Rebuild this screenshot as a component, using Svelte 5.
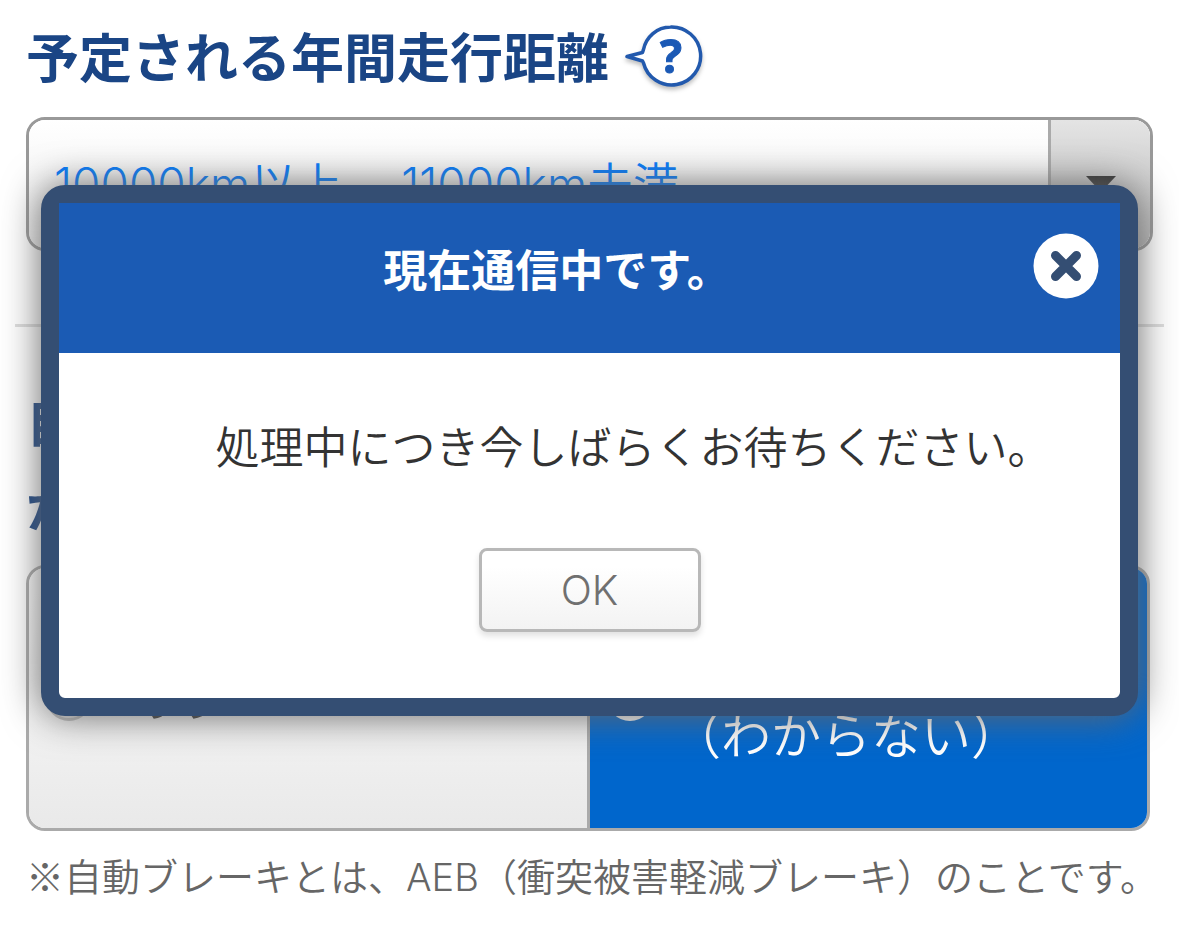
<script>
  let mileage = $state('10000');
  let brake = $state('no');
  let open = $state(true);
</script>

<main>
  <form>
    <section class="block first">
      <div class="title-row">
        <label class="title" for="mileage">予定される年間走行距離</label>
        <button type="button" class="help" aria-label="ヘルプ">
          <svg viewBox="0 0 80 70" width="80" height="70" aria-hidden="true">
            <path class="bubble" d="M19.5 29.5 C22 17 33 7 46.500 7 A29 29 0 1 1 19.500 43 L18.500 41 L3 36.500 L18.500 32.500 Z" />
            <text x="47" y="53" text-anchor="middle">?</text>
          </svg>
        </button>
      </div>
      <div class="picker">
        <select id="mileage" bind:value={mileage}>
          <option value="10000">10000km以上&#x3000; 11000km未満</option>
        </select>
        <span class="arrow" aria-hidden="true">
          <svg viewBox="0 0 30 16" width="30" height="16"><path d="M0 0H30L15 16Z" /></svg>
        </span>
      </div>
    </section>

    <fieldset class="block">
      <legend class="title">自動ブレーキは装着されています<br />か？</legend>
      <div class="choices">
        <label class="choice">
          <input type="radio" name="brake" value="yes" bind:group={brake} />
          <span>あり</span>
        </label>
        <label class="choice">
          <input type="radio" name="brake" value="no" bind:group={brake} />
          <span>なし<br />（わからない）</span>
        </label>
      </div>
      <p class="note"><span class="mark">※</span>自動ブレーキとは、AEB（衝突被害軽減ブレーキ）のことです。</p>
    </fieldset>
  </form>

  {#if open}
    <div class="dialog" role="dialog" aria-labelledby="dialog-title">
      <header>
        <h2 id="dialog-title">現在通信中です。</h2>
        <button type="button" class="close" aria-label="閉じる" onclick={() => (open = false)}>
          <svg viewBox="0 0 66 66" width="66" height="66" aria-hidden="true">
            <circle cx="33" cy="33" r="32.500" />
            <path d="M22.500 22.500L43.500 43.500M43.500 22.500L22.500 43.500" />
          </svg>
        </button>
      </header>
      <div class="body">
        <p>処理中につき今しばらくお待ちください。</p>
        <button type="button" class="ok" onclick={() => (open = false)}>OK</button>
      </div>
    </div>
  {/if}
</main>

<style>
  :global(body) {
    margin: 0;
    background: #fff;
  }
  main {
    position: relative;
    overflow: hidden;
    padding: 0 15px 24px;
    font-family: Inter, "Noto Sans CJK JP", sans-serif;
    font-weight: 350;
  }
  main * {
    box-sizing: border-box;
  }
  button,
  select {
    font: inherit;
    margin: 0;
  }
  button {
    cursor: pointer;
  }
  .block {
    margin: 0;
    padding: 0 11px;
    border: 0;
    min-width: 0;
  }
  .first {
    padding-bottom: 73px;
    border-bottom: 3px solid #ddd;
  }
  .title {
    padding: 0;
    color: #1a4585;
    font-size: 53px;
    font-weight: 700;
    line-height: 86px;
  }
  .title-row {
    display: flex;
    align-items: center;
    gap: 15px;
    height: 117px;
  }
  .help {
    padding: 0 0 8px;
    border: 0;
    background: none;
    line-height: 0;
  }
  .help svg {
    filter: drop-shadow(0 3px 2px rgba(0, 0, 0, 0.25));
  }
  .bubble {
    fill: #fff;
    stroke: #2259ad;
    stroke-width: 3.500;
    stroke-linejoin: round;
  }
  .help text {
    fill: #1b59b5;
    stroke: #1b59b5;
    font: 700 46px "Noto Sans", sans-serif;
  }
  .picker {
    display: grid;
    grid-template-columns: 1fr 102px;
    height: 134px;
    overflow: hidden;
    border: 3px solid #999;
    border-radius: 19px;
  }
  .picker select {
    grid-area: 1 / 1 / 2 / 3;
    appearance: none;
    padding: 0 120px 0 25px;
    border: 0;
    border-radius: 0;
    background: linear-gradient(#fff, #eee);
    color: #007aff;
    font-size: 46px;
  }
  .arrow {
    grid-area: 1 / 2;
    display: flex;
    align-items: center;
    justify-content: center;
    border-left: 3px solid #aaa;
    background: linear-gradient(#e4e4e4, #b8b8b8);
    pointer-events: none;
  }
  .arrow path {
    fill: #333;
  }
  fieldset .title {
    float: left;
    width: 100%;
    margin-top: 53px;
    margin-bottom: 13px;
  }
  .choices {
    clear: both;
    display: grid;
    grid-template-columns: calc(50% - 1px) 1fr;
    height: 266px;
    margin-right: 3px;
    overflow: hidden;
    border: 3px solid #aaa;
    border-radius: 19px;
  }
  .choice {
    display: flex;
    align-items: center;
    gap: 33px;
    padding-left: 17px;
    background: linear-gradient(#fff, #e9e9e9);
    color: #333;
    font-size: 50px;
    line-height: 76px;
  }
  .choice span {
    text-align: center;
  }
  .choice + .choice {
    gap: 18px;
    border-left: 3px solid #aaa;
  }
  .choice:has(input:checked) {
    background: #0066cc;
    color: #fff;
  }
  .choice input {
    appearance: none;
    width: 46px;
    height: 46px;
    margin: 0;
    border: 3px solid #bbb;
    border-radius: 50%;
    background: #ddd;
  }
  .choice input:checked {
    border-color: #fff;
    background: radial-gradient(circle, #0066cc 32%, #fff 36%);
  }
  .note {
    margin: 17px 0 0;
    color: #666;
    font-size: 38px;
    line-height: 54px;
    white-space: nowrap;
  }
  .mark {
    font-family: "Noto Sans CJK JP", sans-serif;
  }
  .dialog {
    position: absolute;
    top: 185px;
    right: 41px;
    left: 41px;
    border: 18px solid #344e73;
    border-radius: 24px;
    background: #fff;
    box-shadow: 0 0 38px #666;
  }
  header {
    display: flex;
    align-items: center;
    height: 150px;
    padding: 0 21px 14px 0;
    background: #1b5bb4;
  }
  h2 {
    flex: 1;
    margin: 0;
    padding-left: 22px;
    color: #fff;
    font-size: 44px;
    font-weight: 700;
    line-height: 66px;
    text-align: center;
  }
  .close {
    padding: 0 0 10px;
    border: 0;
    background: none;
    line-height: 0;
  }
  .close circle {
    fill: #fff;
  }
  .close path {
    stroke: #344e73;
    stroke-width: 9;
    stroke-linecap: round;
  }
  .body {
    display: flex;
    flex-direction: column;
    align-items: center;
    gap: 67px;
    padding: 62px 0 66px;
  }
  .body p {
    margin: 0;
    padding-left: 88px;
    color: #333;
    font-size: 44px;
    line-height: 66px;
  }
  .ok {
    width: 222px;
    height: 84px;
    padding: 0;
    border: 3px solid #b8b8b8;
    border-radius: 8px;
    background: linear-gradient(#fff 20%, #f3f3f3);
    box-shadow: 0 4px 6px rgba(0, 0, 0, 0.12);
    color: #707070;
    font-size: 41px;
    line-height: 48px;
  }
</style>
